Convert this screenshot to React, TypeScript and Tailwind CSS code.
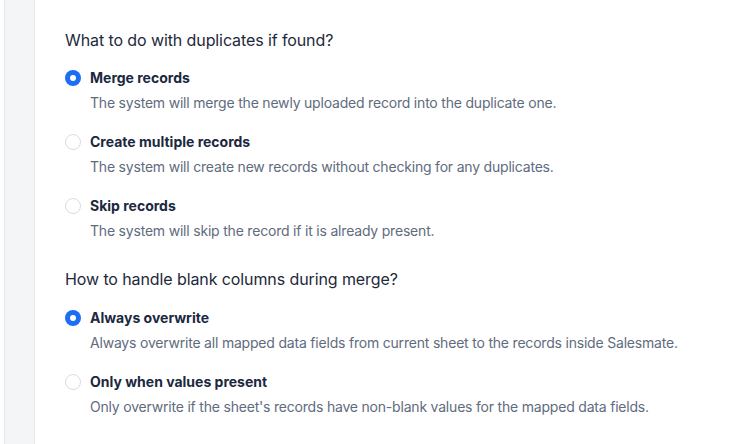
import React, { useState } from "react";

type Option = { id: string; label: string; desc: string };

const duplicateOptions: Option[] = [
  { id: "merge", label: "Merge records", desc: "The system will merge the newly uploaded record into the duplicate one." },
  { id: "multiple", label: "Create multiple records", desc: "The system will create new records without checking for any duplicates." },
  { id: "skip", label: "Skip records", desc: "The system will skip the record if it is already present." },
];

const blankOptions: Option[] = [
  { id: "always", label: "Always overwrite", desc: "Always overwrite all mapped data fields from current sheet to the records inside Salesmate." },
  { id: "values", label: "Only when values present", desc: "Only overwrite if the sheet's records have non-blank values for the mapped data fields." },
];

function Radio({ checked }: { checked: boolean }) {
  return checked ? (
    <span className="flex h-4 w-4 shrink-0 items-center justify-center rounded-full bg-[#1d6ef5]">
      <span className="h-[6px] w-[6px] rounded-full bg-white" />
    </span>
  ) : (
    <span className="h-4 w-4 shrink-0 rounded-full border border-[#d8dce3] bg-white" />
  );
}

function RadioGroup({ options, value, onChange }: { options: Option[]; value: string; onChange: (v: string) => void }) {
  return (
    <div className="flex flex-col gap-[19px]">
      {options.map(o => (
        <label key={o.id} className="flex cursor-pointer flex-col gap-[5px]" onClick={() => onChange(o.id)}>
          <div className="flex items-center gap-[9px]">
            <Radio checked={value === o.id} />
            <span className="text-sm leading-5 font-bold text-[#1b2840]">{o.label}</span>
          </div>
          <p className="pl-[25px] text-sm leading-5 tracking-[-0.2px] text-[#5f6b7e]">{o.desc}</p>
        </label>
      ))}
    </div>
  );
}

export default function App() {
  const [dup, setDup] = useState("merge");
  const [blank, setBlank] = useState("always");

  return (
    <div className="flex min-h-[444px] bg-white font-['Inter',sans-serif] antialiased">
      <div className="ml-1 w-[31px] shrink-0 border-x border-[#e4e7ec] bg-[#f4f5f7]" />
      <div className="flex flex-col pl-[30px] pt-[28px]">
        <h2 className="text-base leading-6 tracking-[-0.1px] text-[#1e293b]">What to do with duplicates if found?</h2>
        <div className="mt-4">
          <RadioGroup options={duplicateOptions} value={dup} onChange={setDup} />
        </div>
        <h2 className="mt-[26px] text-base leading-6 tracking-[-0.1px] text-[#1e293b]">How to handle blank columns during merge?</h2>
        <div className="mt-[17px]">
          <RadioGroup options={blankOptions} value={blank} onChange={setBlank} />
        </div>
      </div>
    </div>
  );
}
